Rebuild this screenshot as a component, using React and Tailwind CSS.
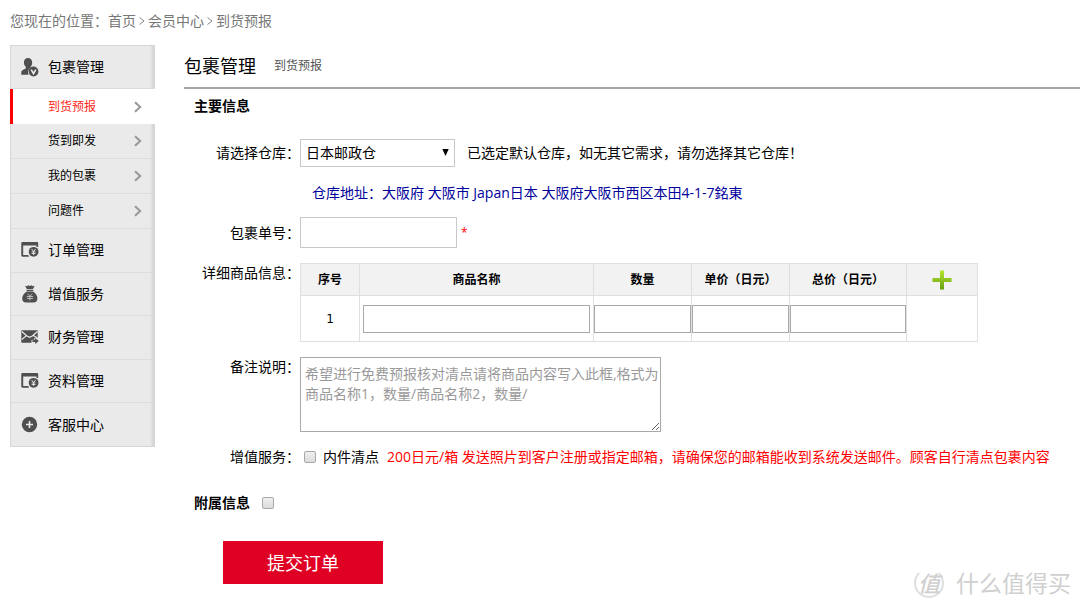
import { useState } from 'react'

const subItems = ['到货预报', '货到即发', '我的包裹', '问题件']

const mainItems = [
  { label: '订单管理', icon: OrderIcon },
  { label: '增值服务', icon: MoneyBagIcon },
  { label: '财务管理', icon: MailIcon },
  { label: '资料管理', icon: OrderIcon },
  { label: '客服中心', icon: PlusCircleIcon },
]

function UserIcon() {
  return (
    <svg width="18" height="19" viewBox="0 0 18 19" aria-hidden="true">
      <path
        fill="#4f4f4f"
        d="M7 0c2.6 0 4.2 1.9 4.2 4.6 0 1.8-.7 3.3-1.7 4.2v1.3c-1.6 1-2.5 2.5-2.5 4.2 0 .9.2 1.7.6 2.4H.3v-2.4c0-1.9 2.6-2.7 4.5-3.8V8.800C3.700 7.900 2.900 6.400 2.900 4.600 2.900 1.900 4.400 0 7 0z"
      />
      <circle cx="12.500" cy="13.500" r="4.900" fill="#4f4f4f" />
      <path d="M10.200 11.600l2.300 4 2.300-4" fill="none" stroke="#eaeaea" strokeWidth="1.700" />
    </svg>
  )
}

function OrderIcon() {
  return (
    <svg width="18" height="16" viewBox="0 0 18 16" aria-hidden="true">
      <path
        fill="#4f4f4f"
        d="M1.500 0h14.500c.7 0 1.200.5 1.200 1.200V5h-1.700V3.600H2.200v9.300h5.100c.2.700.5 1.300.9 1.800H1.500C.8 14.700.3 14.200.3 13.500V1.200C.3.500.8 0 1.500 0z"
      />
      <circle cx="12.600" cy="9.800" r="4.900" fill="#4f4f4f" />
      <path
        d="M10.600 7l2 2.600L14.600 7M12.600 9.600v3.300M10.700 9.900h3.800M10.700 11.500h3.800"
        fill="none"
        stroke="#eaeaea"
        strokeWidth="0.900"
      />
    </svg>
  )
}

function MoneyBagIcon() {
  return (
    <svg width="18" height="18" viewBox="0 0 18 18" aria-hidden="true">
      <path
        fill="#4f4f4f"
        d="M4 .8l2 .5L7.300.3l1.500.8L10.500.3l1.300 1L13.700.8 12 4H5.800zM5.600 4.700h6.600v1.300H5.600zM5.800 6.500h6.300c2.900 1.800 4.300 4.300 4.300 7 0 2.800-1.500 4.100-3.800 4.100H5c-2.300 0-3.800-1.300-3.800-4.100 0-2.700 1.600-5.200 4.600-7z"
      />
      <path
        d="M6.500 8.800l2.400 2.400 2.400-2.400M8.900 11.200v4.200M5.800 11.500h6.200M5.800 13.400h6.200"
        fill="none"
        stroke="#c4c4c4"
        strokeWidth="0.900"
      />
    </svg>
  )
}

function MailIcon() {
  return (
    <svg width="18" height="14" viewBox="0 0 18 14" aria-hidden="true">
      <path fill="#4f4f4f" d="M.8.300h15.900v7.400h-3.400v2h-2.800v3H.8c-.3 0-.5-.2-.5-.5V.8C.3.500.5.300.8.300z" />
      <path
        d="M.8 1.500L6 6l2.600 1.400L11.300 6l5.200-4.500M.8 9.500L5.500 5.600M12.500 5.600l3.500 2.200"
        fill="none"
        stroke="#eaeaea"
        strokeWidth="1.200"
      />
      <path fill="#4f4f4f" d="M11.500 9.800h2.700V8l3.600 3-3.600 3v-1.900h-2.700z" />
    </svg>
  )
}

function PlusCircleIcon() {
  return (
    <svg width="18" height="17" viewBox="0 0 18 17" aria-hidden="true">
      <circle cx="8.500" cy="8.500" r="7.700" fill="#4f4f4f" />
      <path d="M8.500 5v7M5 8.500h7" stroke="#eaeaea" strokeWidth="1.600" />
    </svg>
  )
}

function Chevron() {
  return (
    <svg width="8" height="12" viewBox="0 0 8 12" fill="none" stroke="#979797" strokeWidth="2" aria-hidden="true">
      <path d="M1 1.200L6.200 6 1 10.800" />
    </svg>
  )
}

function CrumbArrow() {
  return (
    <svg width="6" height="20" viewBox="0 0 6 20" fill="none" stroke="#888" aria-hidden="true">
      <path d="M.5 6.500L5 10 .5 13.500" />
    </svg>
  )
}

function GreenPlus() {
  return (
    <svg width="20" height="20" viewBox="0 0 20 20" aria-hidden="true">
      <defs>
        <linearGradient id="plus" x1="0" y1="0" x2="0" y2="1">
          <stop offset="0" stopColor="#b4e62f" />
          <stop offset="1" stopColor="#679f10" />
        </linearGradient>
      </defs>
      <path fill="url(#plus)" d="M8 .5h4V8h7.500v4H12v7.500H8V12H.5V8H8z" />
    </svg>
  )
}

function Row({ label, htmlFor, className, children }) {
  return (
    <div className={`flex ${className}`}>
      <label htmlFor={htmlFor} className="w-[116px] shrink-0 text-right leading-5">
        {label}
      </label>
      {children}
    </div>
  )
}

const checkbox =
  'size-[12px] shrink-0 appearance-none rounded-xs border border-[#a8a8a8] bg-linear-to-b from-[#efefef] to-[#dcdcdc] checked:from-[#777] checked:to-[#777]'

function Sidebar() {
  const [active, setActive] = useState(0)

  return (
    <nav className="flex min-h-[402px] w-[145px] shrink-0 flex-col border border-[#d6d6d6] bg-[#eaeaea] bg-linear-to-l from-[#d2d2d2] to-[#eaeaea] to-[4px]">
      <a href="#package" className="flex h-[43px] items-center border-b border-[#dcdcdc] pl-[10px]">
        <span className="w-[27px]">
          <UserIcon />
        </span>
        包裹管理
      </a>
      <ul>
        {subItems.map((item, i) => (
          <li key={item}>
            <a
              href="#sub"
              onClick={() => setActive(i)}
              className={`-ml-px flex h-[35px] items-center justify-between text-xs ${
                i === active
                  ? '-mr-px border-l-3 border-[#f00] bg-white pr-[13px] pl-[35px] text-[#ff2a1a]'
                  : 'border-b border-b-[#dcdcdc] pr-[12px] pl-[38px]'
              }`}
            >
              {item}
              <Chevron />
            </a>
          </li>
        ))}
      </ul>
      {mainItems.map(({ label, icon: Icon }) => (
        <a
          key={label}
          href="#menu"
          className="flex flex-1 items-center border-b border-[#dcdcdc] pl-[10px] last:border-b-0"
        >
          <span className="w-[27px]">
            <Icon />
          </span>
          {label}
        </a>
      ))}
    </nav>
  )
}

function GoodsTable() {
  const th = 'h-[32px] border border-[#dfdfdf] bg-[#f2f2f2] text-xs font-bold'
  const td = 'h-[46px] border border-[#dfdfdf] text-center text-xs'
  const input = 'block h-[28px] w-full border border-[#a9a9a9] bg-white px-1'

  return (
    <table className="w-[678px] table-fixed border-collapse">
      <colgroup>
        <col className="w-[59px]" />
        <col className="w-[234px]" />
        <col className="w-[98px]" />
        <col className="w-[98px]" />
        <col className="w-[117px]" />
        <col />
      </colgroup>
      <thead>
        <tr>
          <th className={th}>序号</th>
          <th className={th}>商品名称</th>
          <th className={th}>数量</th>
          <th className={th}>单价（日元）</th>
          <th className={th}>总价（日元）</th>
          <th className={th}>
            <button type="button" aria-label="添加" className="mx-auto block">
              <GreenPlus />
            </button>
          </th>
        </tr>
      </thead>
      <tbody>
        <tr>
          <td className={`${td} font-['DejaVu_Sans',sans-serif]`}>1</td>
          <td className={`${td} px-[3px]`}>
            <input aria-label="商品名称" className={input} />
          </td>
          <td className={td}>
            <input aria-label="数量" className={input} />
          </td>
          <td className={td}>
            <input aria-label="单价" className={input} />
          </td>
          <td className={td}>
            <input aria-label="总价" className={input} />
          </td>
          <td className={td}></td>
        </tr>
      </tbody>
    </table>
  )
}

function Watermark() {
  return (
    <div className="pointer-events-none absolute right-[9px] bottom-[9px] flex items-center gap-[12px] text-[#d0d0d0]">
      <span className="flex size-[30px] items-center justify-center rounded-full border-2 border-[#dedede] border-t-transparent text-[22px] leading-none font-medium italic">
        值
      </span>
      <span className="text-[23px] leading-[34px]">什么值得买</span>
    </div>
  )
}

export default function App() {
  return (
    <div
      lang="zh-CN"
      className="relative min-h-screen overflow-x-hidden bg-white pl-[10px] font-['Open_Sans','Noto_Sans_CJK_SC',sans-serif] text-sm text-black"
    >
      <div className="flex h-[45px] items-start gap-[3px] pt-[11px] leading-5 text-[#777]">
        <span>
          您现在的位置：<a href="#home">首页</a>
        </span>
        <CrumbArrow />
        <a href="#member">会员中心</a>
        <CrumbArrow />
        <span>到货预报</span>
      </div>

      <div className="flex items-start">
        <Sidebar />

        <main className="ml-[29px] min-w-0 flex-1">
          <div className="flex h-[44px] items-center gap-[18px] border-b-2 border-[#a6a6a6]">
            <h1 className="text-lg">包裹管理</h1>
            <span className="text-xs text-[#555]">到货预报</span>
          </div>

          <form onSubmit={(e) => e.preventDefault()}>
            <h2 className="mt-[7px] pl-[10px] leading-5 font-bold">主要信息</h2>

            <Row label="请选择仓库：" htmlFor="depot" className="mt-[23px] items-center">
              <div className="relative w-[155px]">
                <select
                  id="depot"
                  className="block h-[28px] w-full appearance-none border border-[#c8c8c8] bg-white pl-[5px]"
                >
                  <option>日本邮政仓</option>
                </select>
                <svg
                  width="7"
                  height="7"
                  viewBox="0 0 7 7"
                  className="pointer-events-none absolute top-[10px] right-[6px]"
                  aria-hidden="true"
                >
                  <path d="M.3 0h6.400L3.500 7z" />
                </svg>
              </div>
              <span className="ml-[12px] whitespace-nowrap">
                已选定默认仓库，如无其它需求，请勿选择其它仓库！
              </span>
            </Row>

            <p className="mt-[16px] pl-[128px] leading-5 text-[#00009c]">
              仓库地址：大阪府 大阪市 Japan日本 大阪府大阪市西区本田4-1-7銘東
            </p>

            <Row label="包裹单号：" htmlFor="number" className="mt-[14px] items-center">
              <input id="number" className="h-[31px] w-[157px] border border-[#c8c8c8] px-1" />
              <span className="ml-[4px] text-xs text-[#f00]">*</span>
            </Row>

            <Row label="详细商品信息：" className="mt-[15px]">
              <GoodsTable />
            </Row>

            <Row label="备注说明：" htmlFor="remark" className="mt-[15px]">
              <textarea
                id="remark"
                className="block h-[75px] w-[361px] border border-[#a9a9a9] py-[6px] pl-[4px] leading-5 placeholder:text-[#999]"
                placeholder="希望进行免费预报核对清点请将商品内容写入此框,格式为商品名称1，数量/商品名称2，数量/"
              />
            </Row>

            <Row label="增值服务：" htmlFor="check" className="mt-[15px] items-center">
              <input id="check" type="checkbox" className={`${checkbox} ml-[4px]`} />
              <label htmlFor="check" className="ml-[7px] whitespace-nowrap">
                内件清点
              </label>
              <span className="ml-[8px] whitespace-nowrap text-[#f00]">
                200日元/箱 发送照片到客户注册或指定邮箱，请确保您的邮箱能收到系统发送邮件。顾客自行清点包裹内容
              </span>
            </Row>

            <div className="mt-[26px] flex items-center gap-[12px] pl-[10px] leading-5">
              <label htmlFor="extra" className="font-bold">
                附属信息
              </label>
              <input id="extra" type="checkbox" className={checkbox} />
            </div>

            <button type="submit" className="mt-[28px] ml-[39px] block h-[43px] w-[160px] bg-[#e00024] text-lg text-white">
              提交订单
            </button>
          </form>
        </main>
      </div>

      <Watermark />
    </div>
  )
}
